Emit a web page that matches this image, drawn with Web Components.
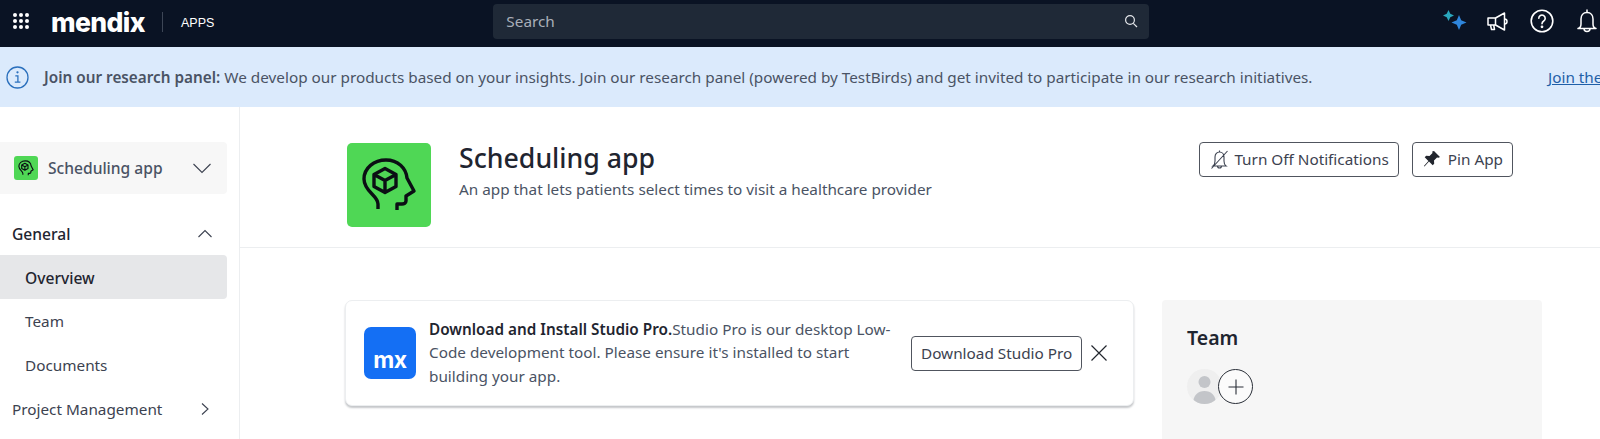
<!doctype html>
<html><head><meta charset="utf-8"><style>
html,body{margin:0;padding:0;height:439px;overflow:hidden;background:#fff;font-family:"Noto Sans",sans-serif}
</style></head><body>
<mx-app></mx-app>
<script>
const head=(size,sw)=>`<svg width="${size}" height="${size}" viewBox="7 13 84 84" fill="none" stroke="#0b0f14" stroke-width="${sw}" stroke-linejoin="round"><path d="M38 79v-5c0-4-3-7-6-10-5-5-8-9-8-15 0-11 10-19 22-19s20 8 21 18l7 13-8 5v5c0 2-2 3-4 3h-5v6"/><path d="M45 38.500l11 6v12l-11 6-11-6v-12zM34 44.500l11 6 11-6M45 50.500v12"/></svg>`;
class TopBar extends HTMLElement{constructor(){super();this.attachShadow({mode:'open'}).innerHTML=`<style>
:host{display:flex;align-items:center;height:47px;background:#0a1324;color:#fff;position:relative;flex:none}
.grid{display:grid;grid-template-columns:repeat(3,4px);gap:2px;margin-left:13px;margin-top:-5px}
.grid i{width:4px;height:4px;border-radius:50%;background:#fff}
.logo{font:800 26.500px/30px "Inter","Noto Sans",sans-serif;letter-spacing:-.6px;margin-left:22px;margin-top:-4px;width:97px}
.sep{width:1px;height:20px;background:#3d4656;margin-left:14px;margin-top:-3px}
.apps{font:500 12.500px "Liberation Sans",sans-serif;margin-left:18px;margin-top:-1px}
.search{margin-left:279px;width:656px;height:35px;background:#1f2937;border-radius:4px;display:flex;align-items:center;justify-content:space-between;padding:0 11px 0 13px;box-sizing:border-box;margin-top:-5px;font-size:15.300px;color:#a9afb9}
.right{margin-left:auto;display:flex;align-items:center;margin-top:-5px;margin-right:1px}
.right svg{display:block}
</style>
<div class="grid">${'<i></i>'.repeat(9)}</div>
<div class="logo">mendix</div><div class="sep"></div><div class="apps">APPS</div>
<div class="search"><span>Search</span><svg width="14" height="14" viewBox="0 0 14 14" fill="none" stroke="#e5e7eb" stroke-width="1.200"><circle cx="6" cy="6" r="4.400"/><path d="M9.300 9.300 13 13"/></svg></div>
<div class="right">
<svg width="26" height="24" viewBox="0 0 26 24" style="margin-right:18px"><path d="M6.500 1 8.300 4.700 12 6.500 8.300 8.300 6.500 12 4.700 8.300 1 6.500 4.700 4.700Z" fill="#2aa7bd"/><path d="M17 6 19.200 11.300 24.500 13.500 19.200 15.700 17 21 14.800 15.700 9.500 13.500 14.800 11.300Z" fill="#2f86dc"/></svg>
<svg width="24" height="24" viewBox="0 0 24 24" fill="none" stroke="#fff" stroke-width="1.500" stroke-linejoin="round" style="margin-right:20px"><path d="M2 9h7.500L18.500 4v17l-9-5H2z"/><path d="M9.500 9v7"/><path d="M18.500 10a2.500 2.500 0 0 1 0 5"/><path d="M4.500 16l1 4.500h3l-.8-4.500"/></svg>
<svg width="24" height="24" viewBox="0 0 24 24" fill="none" stroke="#fff" stroke-width="1.600" style="margin-right:21px"><circle cx="12" cy="12" r="10.800"/><path d="M8.800 9.300a3.200 3.200 0 1 1 4.900 2.700c-1.100.7-1.700 1.300-1.700 2.800" stroke-linecap="round"/><circle cx="12" cy="17.800" r=".6" fill="#fff"/></svg>
<svg width="24" height="26" viewBox="0 0 24 26" fill="none" stroke="#fff" stroke-width="1.500" stroke-linejoin="round"><path d="M12 4.500c-4 0-6 3-6 6.500v5c0 2.500-1 4-3 4.500h18c-2-.5-3-2-3-4.500v-5c0-3.500-2-6.500-6-6.500z"/><path d="M12 1.500v3"/><path d="M9 20.500a3 3 0 0 0 6 0"/></svg>
</div>`}}
class InfoBanner extends HTMLElement{constructor(){super();this.attachShadow({mode:'open'}).innerHTML=`<style>
:host{display:flex;align-items:center;height:60px;background:#dbeafc;flex:none;font-size:15.300px;color:#4a5364;white-space:nowrap;overflow:hidden;position:relative}
svg{margin-left:6px;flex:none}
.t{margin-left:15px;width:1504px;flex:none}
b{font-weight:600}
a{color:#1f5fa8;text-decoration:underline}
</style>
<svg width="23" height="23" viewBox="0 0 23 23" fill="none" stroke="#2b70bd" stroke-width="1.300"><circle cx="11.500" cy="11.500" r="10.500"/><path d="M9.300 9.800h2.600v6.200M8.800 16.200h5.600"/><circle cx="11.500" cy="6.300" r=".5" fill="#2b70bd"/></svg>
<span class="t"><b>Join our research panel:</b> We develop our products based on your insights. Join our research panel (powered by TestBirds) and get invited to participate in our research initiatives.</span><a>Join the</a>`}}
class SideNav extends HTMLElement{constructor(){super();this.attachShadow({mode:'open'}).innerHTML=`<style>
:host{display:block;width:239px;flex:none;border-right:1px solid #eceef0;color:#3c4250;font-size:15.300px}
.sel{margin-top:35px;width:227px;height:52px;background:#f7f7f7;border-radius:0 4px 4px 0;display:flex;align-items:center;box-sizing:border-box;padding-left:14px;font-size:15.600px;font-weight:500;color:#4a5364}
.sel .ic{width:24px;height:24px;background:#4fd755;border-radius:3px;display:flex;align-items:center;justify-content:center;margin-right:10px}
.sel svg.c{margin-left:auto;margin-right:15px}
.row{height:44px;display:flex;align-items:center;width:227px;box-sizing:border-box;padding-left:12px}
.sub{padding-left:25px}
.head{color:#1f2530;font-weight:500;font-size:15.600px;margin-top:17px;padding-top:1px}
.act{background:#e6e7e9;border-radius:0 4px 4px 0;color:#1f2530;font-weight:500;font-size:15.600px;padding-top:1px}
.row svg{margin-left:auto;margin-right:13px}
.up{padding-bottom:1px}
</style>
<div class="sel"><span class="ic">${head(24,4)}</span>Scheduling app<svg class="c" width="20" height="20" viewBox="0 0 20 20" fill="none" stroke="#3c4250" stroke-width="1.100"><path d="M1.500 6l8.500 8.500 8.500-8.500"/></svg></div>
<div class="row head">General<svg width="18" height="18" viewBox="0 0 18 18" fill="none" stroke="#3c4250" stroke-width="1.100"><path d="M2.500 12l6.500-6.500 6.500 6.500"/></svg></div>
<div class="row sub act">Overview</div>
<div class="row sub">Team</div>
<div class="row sub">Documents</div>
<div class="row up">Project Management<svg width="18" height="18" viewBox="0 0 18 18" fill="none" stroke="#3c4250" stroke-width="1.100"><path d="M6 3.500l6 5.500-6 5.500"/></svg></div>`}}
class OutlineBtn extends HTMLElement{constructor(){super();this.attachShadow({mode:'open'}).innerHTML=`<style>
:host{display:inline-flex;align-items:center;height:35px;box-sizing:border-box;border:1px solid #50555e;border-radius:4px;background:#fff;color:#3c4250;font-size:15.300px;padding:0 9px 1px;gap:5px;white-space:nowrap}
</style><slot name="icon"></slot><slot></slot>`}}
class AppHeader extends HTMLElement{constructor(){super();this.attachShadow({mode:'open'}).innerHTML=`<style>
:host{display:flex;height:141px;box-sizing:border-box;border-bottom:1px solid #eceef0;padding:36px 0 0 107px;flex:none}
.logo{width:84px;height:84px;background:#4fd755;border-radius:5px;flex:none}
.logo svg{display:block}
.txt{margin-left:28px}
h1{margin:0;font:500 26.700px/34px "Noto Sans",sans-serif;color:#1f2530;margin-top:-2px}
p{margin:4px 0 0;font-size:15.300px;line-height:20px;color:#4a5364}
.btns{margin-left:auto;margin-right:87px;display:flex;gap:13px;height:35px;margin-top:-1px}
</style>
<div class="logo">${head(84,3.400)}</div>
<div class="txt"><h1>Scheduling app</h1><p>An app that lets patients select times to visit a healthcare provider</p></div>
<div class="btns">
<x-btn><svg slot="icon" width="21" height="21" viewBox="0 0 21 21" fill="none" stroke="#3c4250" stroke-width="1.100" style="margin-right:-1px"><path d="M4 17c1.500-1 2-3 2-5V8c0-3 2-5 4.500-5S15 5 15 8v4c0 2 .5 4 2 5zM10.500 1.500V3M8.500 17a2 2 0 0 0 4 0M2.500 19.500 18.500 2"/></svg>Turn Off Notifications</x-btn>
<x-btn><svg slot="icon" width="20" height="20" viewBox="0 0 20 20" fill="#22262e" style="margin-right:1px"><path d="M12 2l6 6-1.500.8-1.500-.3-3 3 .2 3.300-1.500 1.500L7 12.600 2.500 17.500l-.6-.5L6.400 12 2.700 8.300l1.500-1.500 3.300.2 3-3-.3-1.500z"/></svg>Pin App</x-btn>
</div>`}}
class StudioCard extends HTMLElement{constructor(){super();this.attachShadow({mode:'open'}).innerHTML=`<style>
:host{display:flex;align-items:center;width:789px;height:106px;box-sizing:border-box;background:#fff;border:1px solid #eceef0;border-radius:7px;box-shadow:0 2px 2px #c5c7ca;flex:none;padding-left:18px}
.mx{width:52px;height:52px;background:#146ff4;border-radius:7px;color:#fff;font:700 23px/1 "Inter",sans-serif;display:flex;align-items:flex-end;justify-content:center;padding-bottom:7px;box-sizing:border-box;letter-spacing:-.5px;flex:none}
.txt{width:480px;margin-left:13px;font-size:15.300px;line-height:23.500px;color:#4a5364;flex:none}
b{font-weight:600;color:#1f2530}
x-btn{margin-left:2px}
.x{margin-left:8px}
</style>
<div class="mx">mx</div>
<div class="txt"><b>Download and Install Studio Pro.</b>Studio Pro is our desktop Low-Code development tool. Please ensure it's installed to start building your app.</div>
<x-btn>Download Studio Pro</x-btn>
<svg class="x" width="18" height="18" viewBox="0 0 18 18" fill="none" stroke="#22262e" stroke-width="1.200"><path d="M1.500 1.500l15 15M16.500 1.500l-15 15"/></svg>`}}
class TeamCard extends HTMLElement{constructor(){super();this.attachShadow({mode:'open'}).innerHTML=`<style>
:host{display:block;width:380px;background:#f6f6f6;border-radius:4px 4px 0 0;box-sizing:border-box;padding:25px 25px;flex:none;margin-left:28px}
h2{margin:0;font:600 19.500px/26px "Noto Sans",sans-serif;color:#1f2530}
.av{display:flex;margin-top:18px;position:relative}
.p{width:35px;height:35px;border-radius:50%;background:#efefef;overflow:hidden;flex:none}
.add{width:35px;height:35px;border-radius:50%;border:1px solid #2a2f38;box-sizing:border-box;margin-left:-4px;display:flex;align-items:center;justify-content:center;background:#fbfbfb;flex:none;position:relative}
</style><h2>Team</h2>
<div class="av"><div class="p"><svg width="35" height="35" viewBox="0 0 35 35" fill="#c3c5c9"><circle cx="17.500" cy="13" r="6"/><path d="M6 35c0-9 5-13 11.500-13S29 26 29 35z"/></svg></div><div class="add"><svg width="18" height="18" viewBox="0 0 18 18" fill="none" stroke="#2a2f38" stroke-width="1.100"><path d="M9 1.500v15M1.500 9h15"/></svg></div></div>`}}
class MxApp extends HTMLElement{constructor(){super();this.attachShadow({mode:'open'}).innerHTML=`<style>
:host{display:flex;flex-direction:column;width:1600px;height:439px;overflow:hidden}
.body{display:flex;flex:1;min-height:0}
main{flex:1;display:flex;flex-direction:column;min-width:0}
.cols{display:flex;padding:52px 0 0 105px;align-items:stretch;flex:1}
</style>
<top-bar></top-bar><info-banner></info-banner>
<div class="body"><side-nav></side-nav><main><app-header></app-header><div class="cols"><studio-card></studio-card><team-card></team-card></div></main></div>`}}
customElements.define('x-btn',OutlineBtn);
customElements.define('top-bar',TopBar);
customElements.define('info-banner',InfoBanner);
customElements.define('side-nav',SideNav);
customElements.define('app-header',AppHeader);
customElements.define('studio-card',StudioCard);
customElements.define('team-card',TeamCard);
customElements.define('mx-app',MxApp);
</script></body></html>
